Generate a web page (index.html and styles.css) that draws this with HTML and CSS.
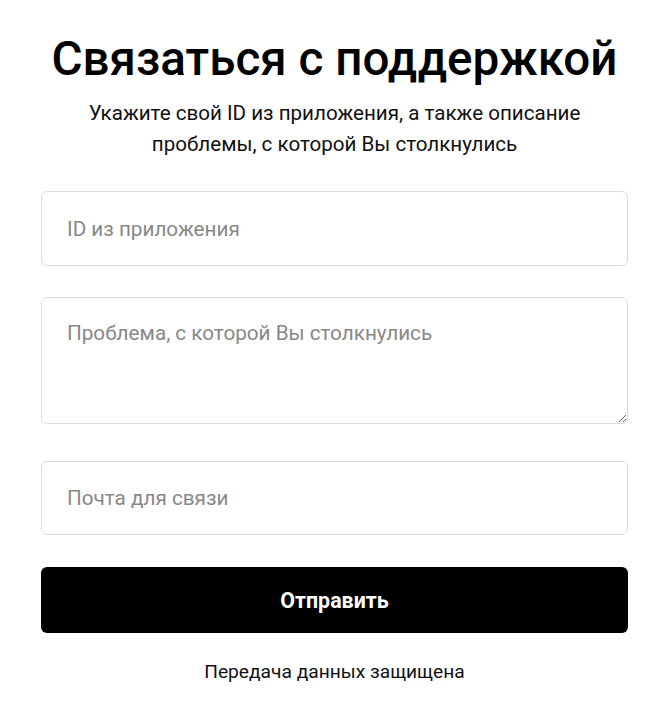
FILE: index.html
```html
<!DOCTYPE html>
<html lang="ru">
<head>
<meta charset="utf-8">
<title>Связаться с поддержкой</title>
<link rel="stylesheet" href="styles.css">
</head>
<body>
<main class="page">
  <h1 class="title">Связаться с поддержкой</h1>
  <p class="subtitle">Укажите свой ID из приложения, а также описание<br>проблемы, с которой Вы столкнулись</p>
  <form class="form">
    <input class="field field-id" type="text" placeholder="ID из приложения">
    <textarea class="field area" placeholder="Проблема, с которой Вы столкнулись"></textarea>
    <input class="field field-mail" type="email" placeholder="Почта для связи">
    <button class="submit" type="button">Отправить</button>
  </form>
  <p class="note">Передача данных защищена</p>
</main>
</body>
</html>
```
FILE: styles.css
```css
html, body {
  margin: 0;
  padding: 0;
  background: #fff;
}
body {
  font-family: Roboto, "Liberation Sans", sans-serif;
  color: #000;
}
.page {
  padding: 28px 43px 0 41px;
  display: flex;
  flex-direction: column;
  align-items: stretch;
}
.title {
  margin: 0;
  text-align: center;
  font-size: 47.6px;
  font-weight: 500;
  line-height: 62px;
}
.subtitle {
  margin: 8px 0 0;
  text-align: center;
  font-size: 20.6px;
  line-height: 31px;
  color: #111;
}
.form {
  margin-top: 31px;
  display: flex;
  flex-direction: column;
}
.field {
  display: block;
  box-sizing: border-box;
  width: 100%;
  height: 75px;
  margin: 0;
  padding: 0 25px;
  border: 1px solid #dcdcdc;
  border-radius: 6px;
  font-family: Roboto, "Liberation Sans", sans-serif;
  font-size: 20.7px;
  color: #000;
  background: #fff;
  outline: none;
}
.field::placeholder {
  color: #888;
}
.area {
  height: 127px;
  margin-top: 31px;
  padding-top: 23px;
  padding-bottom: 23px;
  line-height: 24px;
  resize: vertical;
}
.field-mail {
  margin-top: 37px;
  height: 74px;
}
.submit {
  display: block;
  width: 100%;
  height: 66px;
  margin-top: 32px;
  border: 0;
  border-radius: 6px;
  background: #000;
  color: #fff;
  font-family: Roboto, "Liberation Sans", sans-serif;
  font-size: 21.4px;
  font-weight: 700;
  cursor: pointer;
}
.note {
  margin: 27px 0 0;
  text-align: center;
  font-size: 19.2px;
  line-height: 24px;
  color: #111;
}
```
